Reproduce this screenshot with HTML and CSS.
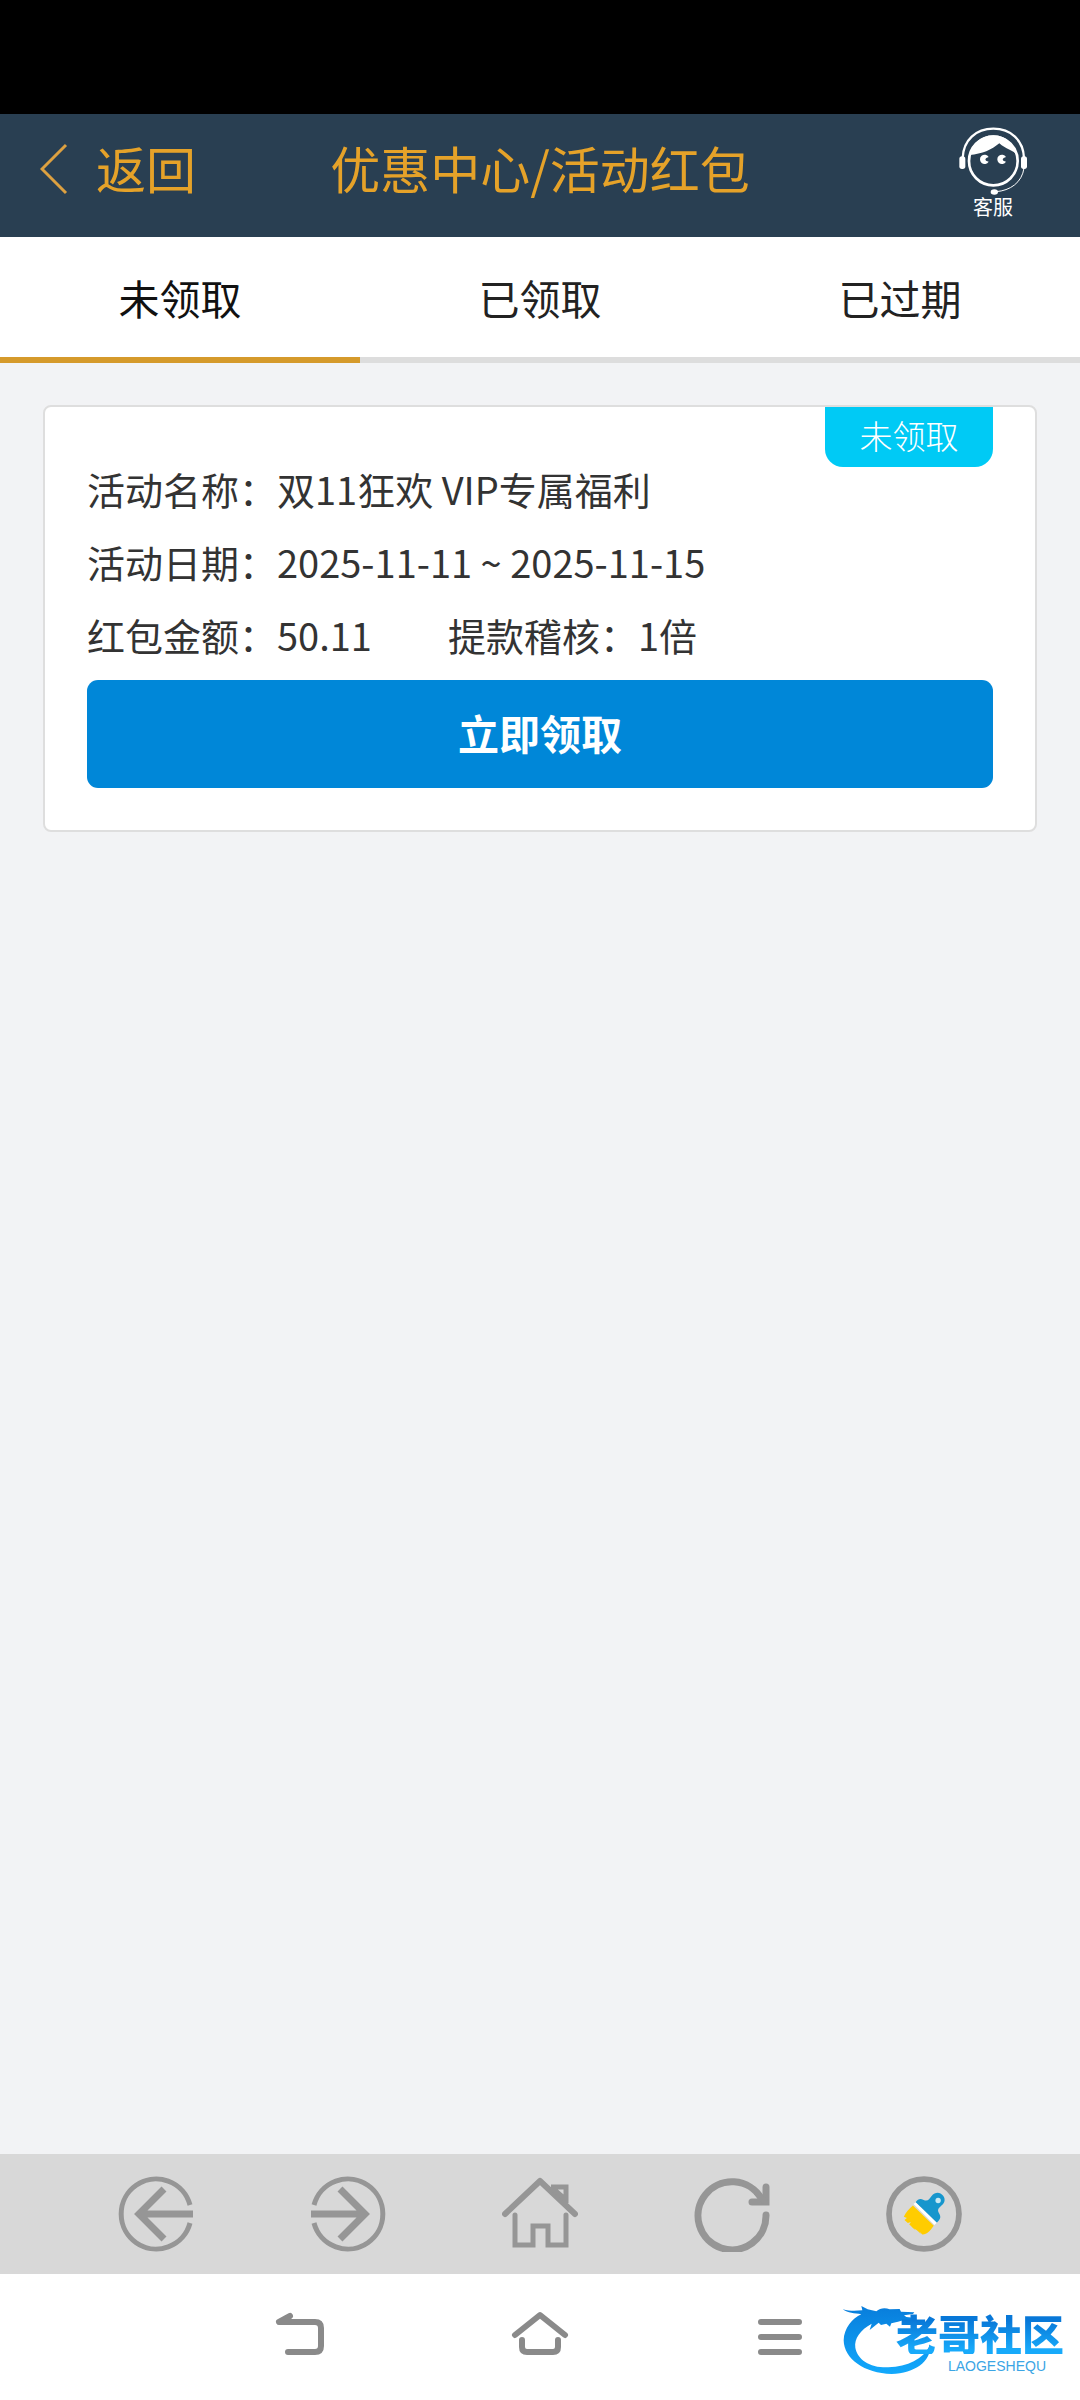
FILE: index.html
```html
<!DOCTYPE html>
<html lang="zh-CN">
<head>
<meta charset="utf-8">
<meta name="viewport" content="width=device-width, initial-scale=1">
<title>优惠中心/活动红包</title>
<link rel="stylesheet" href="styles.css">
</head>
<body>
<div class="status-bar"></div>
<header class="header">
  <a class="back" href="#">
    <svg class="back-icon" viewBox="0 0 28 52" aria-hidden="true"><path d="M26 2 2 26 26 50"/></svg>
    <span>返回</span>
  </a>
  <h1 class="title">优惠中心/活动红包</h1>
  <a class="service" href="#">
    <svg class="service-icon" viewBox="87 49 204 204" aria-hidden="true">
      <path class="line" stroke-width="7" d="M98 142C100 88 138 54 190 54S280 88 282 142"/>
      <circle class="line" stroke-width="8" cx="190" cy="151" r="73"/>
      <path d="M118 133C126 98 154 74 190 74S254 98 263 137C250 116 226 116 208 98C184 118 158 130 118 133Z"/>
      <rect x="88" y="137" width="18" height="38" rx="8"/>
      <rect x="273" y="137" width="18" height="38" rx="8"/>
      <path d="M176 139A14 14 0 1 0 176 153L168 150 166 146 169 142ZM228 139A14 14 0 1 0 228 153L220 150 218 146 221 142Z"/>
      <path class="line" stroke-width="3" d="M282 172C276 216 240 240 198 243"/>
      <ellipse cx="193" cy="244" rx="11" ry="8"/>
    </svg>
    <span>客服</span>
  </a>
</header>
<nav class="tabs">
  <a class="tab tab-active" href="#">未领取</a>
  <a class="tab" href="#">已领取</a>
  <a class="tab" href="#">已过期</a>
</nav>
<main class="content">
  <article class="card">
    <span class="badge">未领取</span>
    <p class="row">活动名称：双11狂欢 VIP专属福利</p>
    <p class="row">活动日期：2025-11-11 ~ 2025-11-15</p>
    <p class="row row-split"><span>红包金额：50.11</span><span>提款稽核：1倍</span></p>
    <button class="claim" type="button">立即领取</button>
  </article>
</main>
<nav class="toolbar">
  <button class="tool" type="button" aria-label="后退">
    <svg viewBox="0 0 76 76"><path stroke-width="5" d="M72 29A35 35 0 1 0 72 47"/><path stroke-width="7" d="M75 38H20M46 13 21 38 46 63"/></svg>
  </button>
  <button class="tool" type="button" aria-label="前进">
    <svg viewBox="0 0 76 76"><path stroke-width="5" d="M4 29A35 35 0 1 1 4 47"/><path stroke-width="7" d="M1 38H56M30 13 55 38 30 63"/></svg>
  </button>
  <button class="tool" type="button" aria-label="主页">
    <svg viewBox="0 0 76 76"><path class="round" stroke-width="6" d="M3 38 38 5 73 38"/><path class="round-cap" stroke-width="5" d="M13 39V69H31V50H46V69H64V39"/><path stroke-width="5" d="M49 11H64V27M49 11 64 24"/></svg>
  </button>
  <button class="tool" type="button" aria-label="刷新">
    <svg viewBox="0 0 76 76"><path class="round-cap" stroke-width="7" d="M67 22A34 34 0 1 0 72 39"/><path class="round-cap" stroke-width="7" d="M72 11V26H58"/><path stroke-width="6" d="M62 16 71 26"/></svg>
  </button>
  <button class="tool" type="button" aria-label="清理">
    <svg viewBox="78 78 226 226">
      <circle stroke-width="17" cx="191" cy="191" r="104"/>
      <path class="brush-blue" d="M166 156C174 145 180 145 190 149C202 155 207 146 213 138C225 125 238 125 248 137C257 150 251 160 240 169C231 177 231 181 237 191C243 203 237 208 229 217Z"/>
      <path class="brush-white" d="M160 161 166 156 229 217 222 224Z"/>
      <path class="brush-yellow" d="M158 166 220 226C209 241 199 253 186 252L177 243 182 251C178 247 172 239 162 234L166 239C160 236 153 226 147 222L152 215 143 218 133 209 140 203 131 199C136 188 147 175 158 166Z"/>
      <circle class="brush-hole" cx="233" cy="151" r="8"/>
    </svg>
  </button>
</nav>
<footer class="system-nav">
  <button class="sys" type="button" aria-label="返回">
    <svg viewBox="0 0 60 54"><path d="M20 6 9 12H45Q51 12 51 18V36Q51 42 45 42H18"/></svg>
  </button>
  <button class="sys" type="button" aria-label="桌面">
    <svg viewBox="0 0 60 54"><path d="M5 25 30 5 55 25M12 30V37Q12 42 17 42H43Q48 42 48 37V30"/></svg>
  </button>
  <button class="sys" type="button" aria-label="菜单">
    <svg viewBox="0 0 60 54"><path d="M11 12H49M11 27H49M11 42H49"/></svg>
  </button>
  <div class="brand">
    <svg class="brand-dragon" viewBox="30 66 288 222" aria-hidden="true">
      <defs><linearGradient id="water" x1="0" y1="0" x2="0" y2="1"><stop offset="0" stop-color="#087ddb"/><stop offset="1" stop-color="#12a9fc"/></linearGradient></defs>
      <path fill="url(#water)" d="M38 88C60 94 78 93 97 91L94 78 113 88 139 94C150 84 165 82 179 88L209 87 213 95 253 97 249 102 222 106 229 111 251 113 247 126 233 130 220 121 204 125 184 130 180 140 169 131 153 135 146 128 119 150 125 131C91 150 72 175 76 203C83 240 121 264 175 262C234 260 278 239 300 196C304 245 254 280 185 282C103 280 42 237 41 181C42 145 67 115 94 103C73 99 54 100 38 88Z"/>
    </svg>
    <strong class="brand-name">老哥社区</strong>
    <span class="brand-latin">LAOGESHEQU</span>
  </div>
</footer>
</body>
</html>
```
FILE: styles.css
```css
* { box-sizing: border-box; }

body {
  margin: 0;
  min-height: 100vh;
  display: flex;
  flex-direction: column;
  background: #f2f3f5;
  color: #333;
  font-family: "Noto Sans CJK SC", sans-serif;
}

a { color: inherit; text-decoration: none; }
button { border: 0; padding: 0; background: none; font-family: inherit; }
svg { display: block; }

.status-bar { height: 114px; background: #000; }

.header {
  height: 123px;
  padding: 0 53px 0 40px;
  display: grid;
  grid-template-columns: 1fr auto 1fr;
  background: #293f52;
  color: #e5a229;
  font-size: 50px;
  line-height: 106px;
}
.back { display: flex; align-items: flex-start; gap: 28px; }
.back-icon { width: 28px; height: 52px; margin-top: 29px; fill: none; stroke: #dda140; stroke-width: 3; }
.title { margin: 0; padding-left: 13px; font-size: 50px; font-weight: 400; }
.service {
  justify-self: end;
  display: flex;
  flex-direction: column;
  align-items: center;
  padding-top: 13px;
  color: #fff;
  font-size: 20px;
  line-height: 24px;
}
.service-icon { width: 68px; height: 68px; fill: #fff; }
.service-icon .line { fill: none; stroke: #fff; }

.tabs { display: grid; grid-template-columns: repeat(3, 1fr); background: #fff; }
.tab {
  height: 126px;
  border-bottom: 6px solid #ddd;
  color: #222;
  font-size: 41px;
  line-height: 120px;
  text-align: center;
}
.tab-active { border-color: #d59a2b; color: #111; }

.content { flex: 1; padding: 42px 43px; }
.card {
  position: relative;
  padding: 45px 42px 42px;
  border: 2px solid #dedede;
  border-radius: 8px;
  background: #fff;
}
.badge {
  position: absolute;
  top: 0;
  right: 42px;
  width: 168px;
  height: 60px;
  border-radius: 0 0 18px 18px;
  background: #00caf5;
  color: #fff;
  font-size: 33px;
  font-weight: 300;
  line-height: 56px;
  text-align: center;
}
.row { margin: 0; font-size: 38px; line-height: 73px; }
.row-split { display: flex; gap: 76px; }
.claim {
  display: block;
  width: 100%;
  height: 108px;
  margin-top: 9px;
  padding-bottom: 5px;
  border-radius: 11px;
  background: #0087d8;
  color: #fff;
  font-size: 41px;
  font-weight: 700;
}

.toolbar {
  height: 120px;
  padding: 0 60px;
  display: grid;
  grid-template-columns: repeat(5, 1fr);
  background: #d8d8d8;
}
.tool, .sys { display: grid; place-items: center; }
.tool svg { width: 76px; height: 76px; fill: none; stroke: #969696; }
.tool .round { stroke-linecap: round; stroke-linejoin: round; }
.tool .round-cap { stroke-linecap: round; }
.tool .brush-blue { fill: #1696cd; stroke: none; }
.tool .brush-white { fill: #fff; stroke: none; }
.tool .brush-yellow { fill: #fc0; stroke: none; }
.tool .brush-hole { fill: #c7e8f3; stroke: none; }

.system-nav {
  position: relative;
  height: 126px;
  padding: 0 180px;
  display: grid;
  grid-template-columns: repeat(3, 1fr);
  background: #fff;
}
.sys svg {
  width: 60px;
  height: 54px;
  fill: none;
  stroke: #8a8a8a;
  stroke-width: 6;
  stroke-linecap: round;
  stroke-linejoin: round;
}

/* Community mark, floating over the corner of the bar */
.brand { position: absolute; right: 16px; bottom: 22px; width: 224px; height: 76px; }
.brand-dragon { width: 96px; height: 74px; }
.brand-name {
  position: absolute;
  top: 10px;
  right: 0;
  background: linear-gradient(#0878d8 20%, #18aafa 90%);
  background-clip: text;
  color: transparent;
  font-size: 42px;
  font-weight: 900;
  line-height: 42px;
}
.brand-latin {
  position: absolute;
  right: 18px;
  bottom: 5px;
  color: #3ba5e5;
  font-family: "Liberation Sans", sans-serif;
  font-size: 14px;
  line-height: 14px;
}
```
